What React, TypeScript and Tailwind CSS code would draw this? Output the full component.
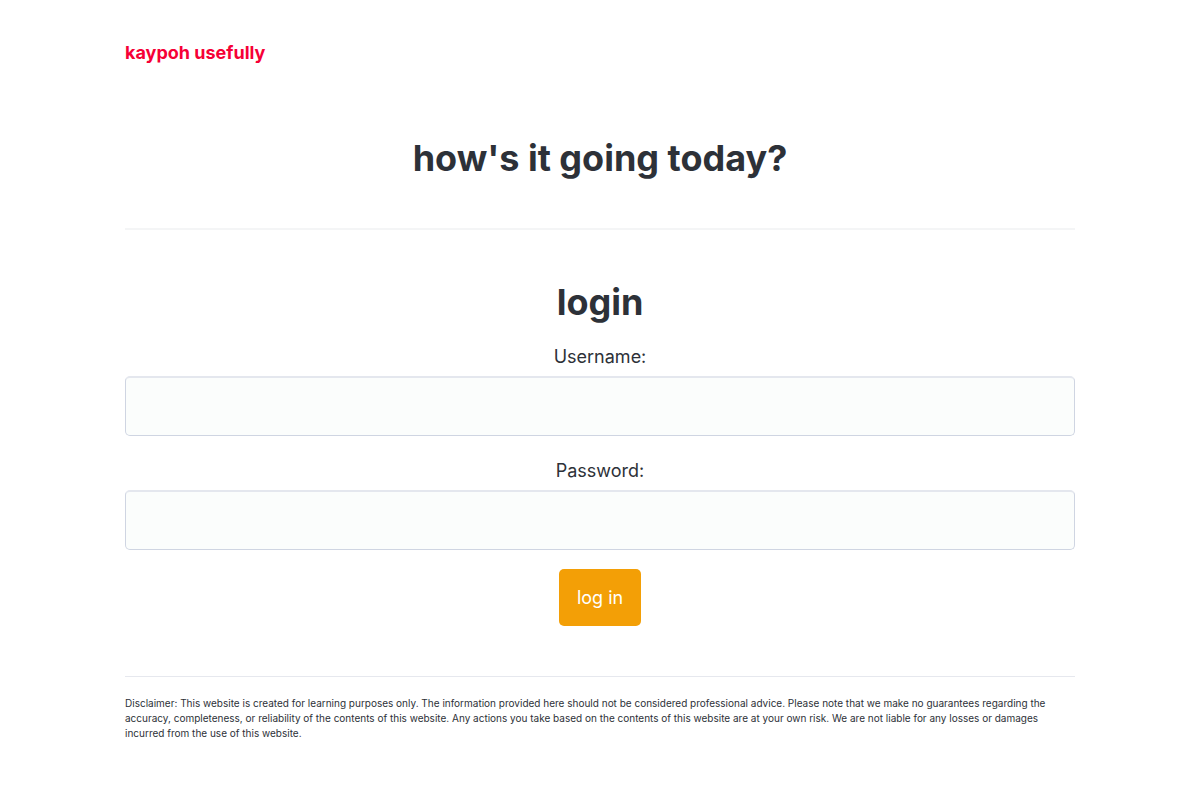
export default function App() {
  const field =
    "mt-[6px] block h-[60px] w-full rounded-[5px] border border-t-2 border-[#cfd5e2] border-t-[#e4e7ee] bg-[#fbfdfc] px-4 outline-none";
  return (
    <div className="mx-auto max-w-[950px] font-['Inter',sans-serif] text-lg leading-[26px] text-[#2d3138]">
      <header className="pt-10">
        <a href="#" className="block font-bold text-[#f60036]">
          kaypoh usefully
        </a>
        <h1 className="mt-[66px] text-center text-4xl leading-[52px] font-bold">how's it going today?</h1>
      </header>
      <main className="mt-11 border-t-2 border-[#f4f5f6] pt-[46px] text-center">
        <h2 className="text-4xl leading-[52px] font-bold">login</h2>
        <form className="mt-4" onSubmit={(e) => e.preventDefault()}>
          <label htmlFor="username" className="block">
            Username:
          </label>
          <input id="username" type="text" className={field} />
          <label htmlFor="password" className="mt-[22px] block">
            Password:
          </label>
          <input id="password" type="password" className={field} />
          <button
            type="submit"
            className="mx-auto mt-[19px] block h-[57px] rounded-[5px] bg-[#f39f06] px-[18px] text-white"
          >
            log in
          </button>
        </form>
      </main>
      <footer className="mt-[50px] border-t border-[#e6e8ee] pt-[19px] pb-12 text-[10px] leading-[15px]">
        Disclaimer: This website is created for learning purposes only. The information provided here should not be
        considered professional advice. Please note that we make no guarantees regarding the accuracy, completeness, or
        reliability of the contents of this website. Any actions you take based on the contents of this website are at
        your own risk. We are not liable for any losses or damages incurred from the use of this website.
      </footer>
    </div>
  );
}
